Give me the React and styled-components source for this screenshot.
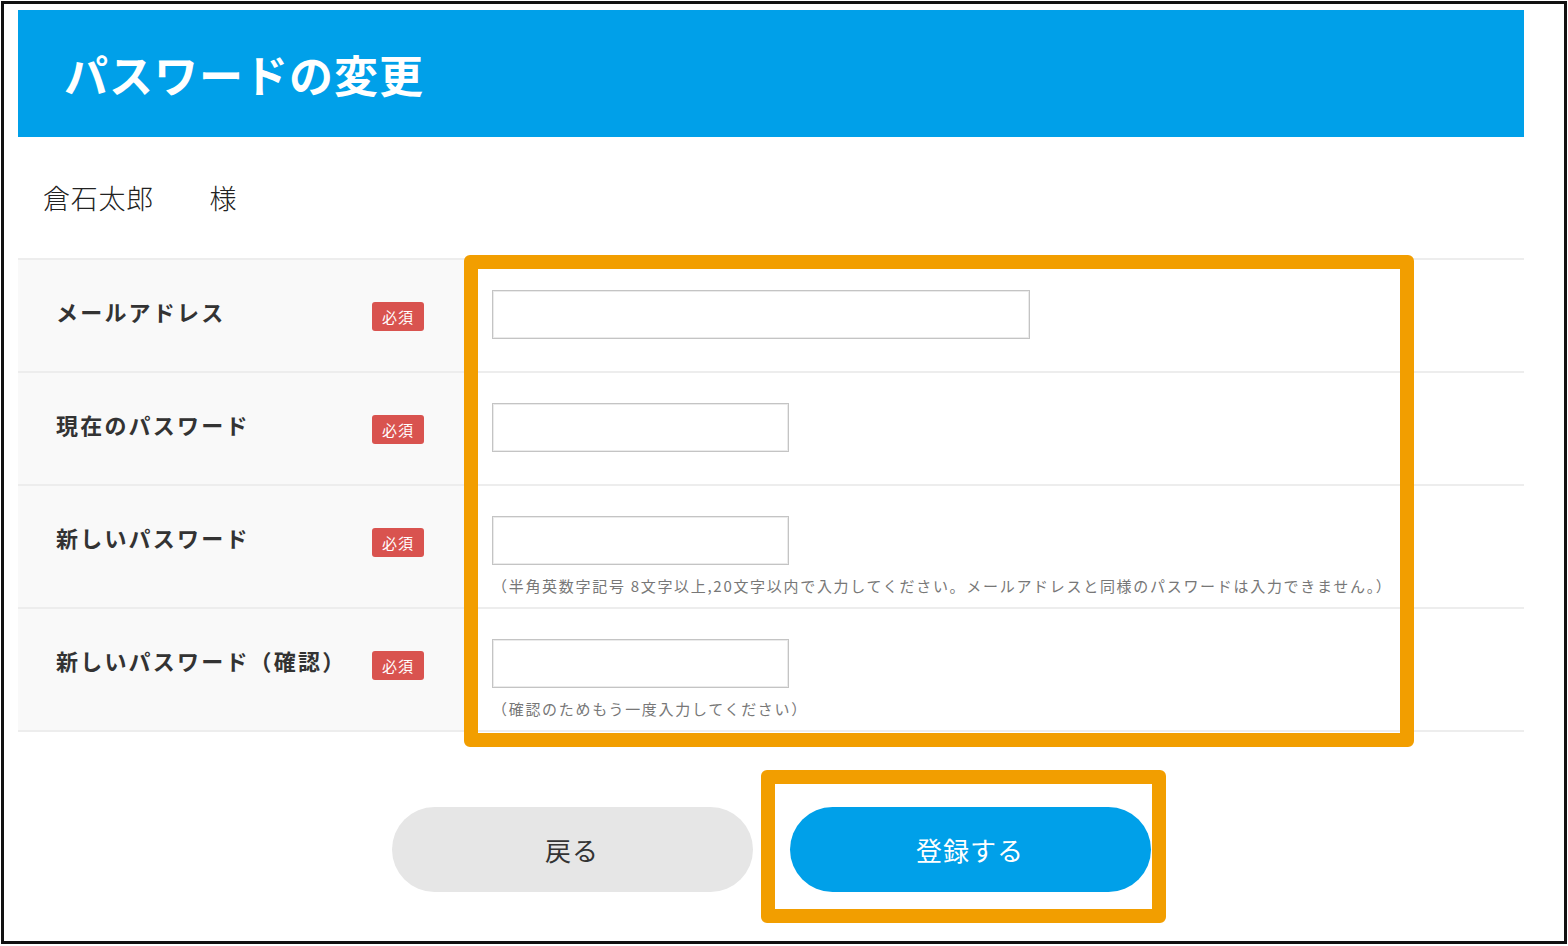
import React from "react";
import styled, { createGlobalStyle } from "styled-components";

const GlobalStyle = createGlobalStyle`
  * {
    box-sizing: border-box;
  }

  body {
    margin: 0;
    background: #fff;
    font-family: "Noto Sans CJK JP", "Noto Sans", sans-serif;
    color: #333;
  }
`;

const Frame = styled.div`
  position: relative;
  width: 1566px;
  height: 943px;
  margin: 1px;
  border: 3px solid #111;
  padding: 6px 0 0 14px;
`;

const Page = styled.div`
  width: 1506px;
`;

const Header = styled.div`
  height: 127px;
  background: #00a0e9;
  display: flex;
  align-items: center;
  padding-left: 46px;
`;

const Title = styled.h1`
  margin: 0;
  color: #fff;
  font-size: 44px;
  font-weight: 700;
  letter-spacing: 1px;
  line-height: 1;
`;

const UserName = styled.p`
  margin: 0;
  padding: 43px 0 42px 25px;
  font-size: 27px;
  letter-spacing: 0.75px;
  line-height: 36px;
  font-weight: 300;
  color: #222;
  white-space: pre;
`;

const Table = styled.div`
  border-top: 2px solid #ededed;
`;

const Row = styled.div`
  display: grid;
  grid-template-columns: 456px 1fr;
  border-bottom: 2px solid #ededed;
`;

const LabelCell = styled.div`
  background: #f9f9f9;
  display: flex;
  align-items: flex-start;
  padding: 36px 50px 0 38px;
`;

const Label = styled.span`
  flex: 1;
  font-size: 22px;
  font-weight: 700;
  letter-spacing: 2.2px;
  line-height: 30px;
  color: #333;
  white-space: nowrap;
`;

const Badge = styled.span`
  margin-top: 6px;
  width: 52px;
  height: 29px;
  border-radius: 3px;
  background: #d9534f;
  color: #fff;
  font-size: 15px;
  line-height: 29px;
  text-align: center;
  letter-spacing: 1px;
`;

const FieldCell = styled.div`
  background: #fff;
  padding: 30px 0 ${(p) => (p.$hasNote ? "10px" : "32px")} 18px;
`;

const Input = styled.input`
  display: block;
  width: ${(p) => p.$width}px;
  height: 49px;
  border: 1px solid #c4c4c4;
  box-shadow: inset 0 0 0 1px #ebebeb;
  border-radius: 0;
  padding: 0 10px;
  font-size: 18px;
  font-family: inherit;
  background: #fff;
  outline: none;
`;

const Note = styled.p`
  margin: 10px 0 0;
  font-size: 15px;
  line-height: 22px;
  letter-spacing: 1.7px;
  color: #777;
  white-space: nowrap;
`;

const Actions = styled.div`
  display: flex;
  justify-content: center;
  gap: 37px;
  margin-top: 75px;
`;

const Button = styled.button`
  width: 361px;
  height: 85px;
  border: none;
  border-radius: 43px;
  font-family: inherit;
  font-size: 26px;
  font-weight: 400;
  letter-spacing: 1px;
  cursor: pointer;
  background: ${(p) => (p.$primary ? "#00a0e9" : "#e6e6e6")};
  color: ${(p) => (p.$primary ? "#fff" : "#333")};
`;

const Highlight = styled.div`
  position: absolute;
  border: 14px solid #f29e00;
  border-radius: 6px;
  pointer-events: none;
`;

const fields = [
  { label: "メールアドレス", width: 538, type: "email" },
  { label: "現在のパスワード", width: 297, type: "password" },
  {
    label: "新しいパスワード",
    width: 297,
    type: "password",
    note: "（半角英数字記号 8文字以上,20文字以内で入力してください。メールアドレスと同様のパスワードは入力できません。）",
  },
  {
    label: "新しいパスワード（確認）",
    width: 297,
    type: "password",
    note: "（確認のためもう一度入力してください）",
  },
];

const App = () => {
  return (
    <>
      <GlobalStyle />
      <Frame>
        <Page>
          <Header>
            <Title>パスワードの変更</Title>
          </Header>
          <UserName>{"倉石太郎　　様"}</UserName>
          <Table>
            {fields.map((field) => (
              <Row key={field.label}>
                <LabelCell>
                  <Label>{field.label}</Label>
                  <Badge>必須</Badge>
                </LabelCell>
                <FieldCell $hasNote={!!field.note}>
                  <Input type={field.type} $width={field.width} />
                  {field.note && <Note>{field.note}</Note>}
                </FieldCell>
              </Row>
            ))}
          </Table>
          <Actions>
            <Button>戻る</Button>
            <Button $primary>登録する</Button>
          </Actions>
        </Page>
        <Highlight style={{ left: 460, top: 251, width: 950, height: 492 }} />
        <Highlight style={{ left: 757, top: 766, width: 405, height: 153 }} />
      </Frame>
    </>
  );
};

export default App;
